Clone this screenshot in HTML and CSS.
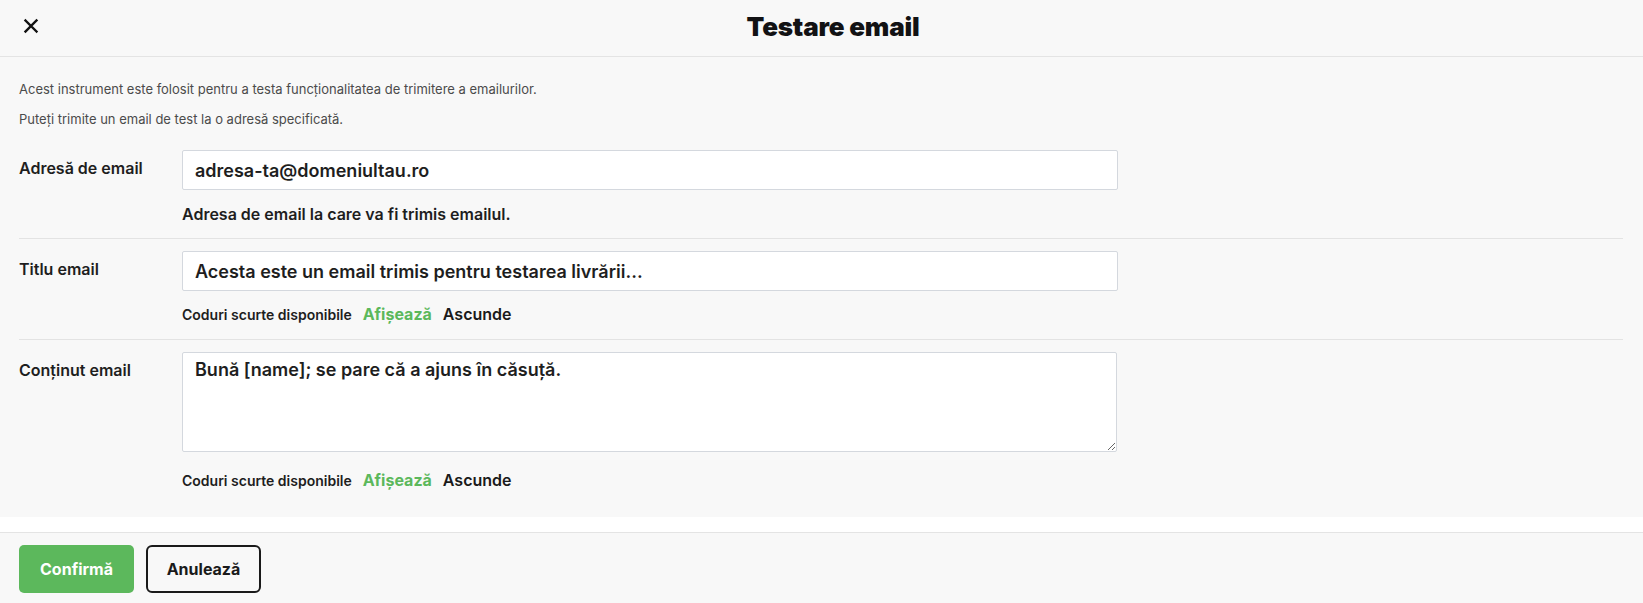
FILE: index.html
```html
<!DOCTYPE html>
<html lang="ro">
<head>
<meta charset="utf-8">
<title>Testare email</title>
<link rel="stylesheet" href="styles.css">
</head>
<body>
<div class="modal">
  <header class="modal-header">
    <button class="close" type="button" aria-label="Închide">
      <svg width="16" height="16" viewBox="0 0 16 16" aria-hidden="true"><path d="M2.5 2.5 L13.5 13.5 M13.5 2.5 L2.5 13.5" stroke="#111" stroke-width="2.4" fill="none" stroke-linecap="square"/></svg>
    </button>
    <h1 class="modal-title">Testare email</h1>
  </header>
  <div class="modal-wrap">
    <div class="modal-body">
      <div class="intro">
        <p>Acest instrument este folosit pentru a testa funcționalitatea de trimitere a emailurilor.</p>
        <p>Puteți trimite un email de test la o adresă specificată.</p>
      </div>
      <div class="field">
        <label class="field-label" for="email">Adresă de email</label>
        <div class="field-control">
          <input id="email" class="input" type="text" value="adresa-ta@domeniultau.ro">
          <div class="hint">Adresa de email la care va fi trimis emailul.</div>
        </div>
      </div>
      <div class="field">
        <label class="field-label" for="subject">Titlu email</label>
        <div class="field-control">
          <input id="subject" class="input" type="text" value="Acesta este un email trimis pentru testarea livrării...">
          <div class="shortcodes"><span class="sc-label">Coduri scurte disponibile</span><a class="sc-show" href="#">Afișează</a><a class="sc-hide" href="#">Ascunde</a></div>
        </div>
      </div>
      <div class="field last">
        <label class="field-label" for="content">Conținut email</label>
        <div class="field-control">
          <textarea id="content" class="textarea">Bună [name]; se pare că a ajuns în căsuță.</textarea>
          <div class="shortcodes after-area"><span class="sc-label">Coduri scurte disponibile</span><a class="sc-show" href="#">Afișează</a><a class="sc-hide" href="#">Ascunde</a></div>
        </div>
      </div>
    </div>
  </div>
  <footer class="modal-footer">
    <button class="btn btn-primary" type="button">Confirmă</button>
    <button class="btn btn-outline" type="button">Anulează</button>
  </footer>
</div>
</body>
</html>
```
FILE: styles.css
```css
* { box-sizing: border-box; }
html, body { margin: 0; padding: 0; }
body {
  background: #ffffff;
  font-family: Inter, "Noto Sans", "Liberation Sans", sans-serif;
  color: #222;
}
.modal { width: 1643px; min-height: 603px; display: flex; flex-direction: column; }

.modal-header {
  height: 57px;
  display: flex;
  align-items: center;
  padding: 0 20px 4px 19px;
  background: #f8f8f8;
  border-bottom: 1px solid #e4e4e4;
}
.close {
  width: 24px; height: 24px;
  padding: 0; margin: 0;
  border: 0; background: transparent;
  display: flex; align-items: center; justify-content: flex-start;
  padding-left: 4px;
  cursor: pointer;
}
.close svg { display: block; }
.modal-title {
  flex: 1;
  margin: 0;
  text-align: center;
  font-size: 26px;
  font-weight: 900;
  color: #121214;
  letter-spacing: -0.2px;
}

.modal-wrap { background: #fff; padding-bottom: 15px; }
.modal-body {
  background: #f8f8f8;
  padding: 23px 20px 12px 19px;
}
.intro { display: flex; flex-direction: column; gap: 12px; margin-bottom: 10px; }
.intro p {
  margin: 0;
  font-size: 13px;
  line-height: 18px;
  color: #4b4b4b;
}

.field {
  display: flex;
  padding: 12px 0;
  border-bottom: 1px solid #e3e3e3;
}
.field.last { border-bottom: 0; }
.field-label {
  width: 163px;
  flex: none;
  padding-top: 6px;
  font-size: 16px;
  line-height: 24px;
  font-weight: 600;
  color: #1e1e1e;
}
.field-control { width: 936px; }
.input {
  display: block;
  width: 936px;
  height: 40px;
  padding: 0 12px;
  border: 1px solid #d4d8de;
  border-radius: 2px;
  background: #fff;
  font-family: inherit;
  font-size: 18px;
  font-weight: 600;
  color: #1e1e1e;
  outline: none;
}
.textarea {
  display: block;
  width: 935px;
  height: 100px;
  padding: 6px 12px;
  border: 1px solid #d4d8de;
  border-radius: 2px;
  background: #fff;
  font-family: inherit;
  font-size: 18px;
  line-height: 22px;
  font-weight: 600;
  color: #1e1e1e;
  outline: none;
  margin: 0;
}
.hint {
  margin-top: 12px;
  font-size: 16px;
  line-height: 24px;
  font-weight: 600;
  color: #1e1e1e;
}
.shortcodes {
  margin-top: 11px;
  display: flex;
  align-items: baseline;
  gap: 11px;
  line-height: 24px;
}
.shortcodes.after-area { margin-top: 16px; }
.sc-label { font-size: 14px; font-weight: 600; color: #1e1e1e; }
.sc-show { font-size: 16px; font-weight: 700; color: #5cb85c; text-decoration: none; }
.sc-hide { font-size: 16px; font-weight: 600; color: #1a1a1a; text-decoration: none; }

.modal-footer {
  flex: 1;
  display: flex;
  gap: 12px;
  padding: 12px 20px 10px 19px;
  background: #f8f8f8;
  border-top: 1px solid #e4e4e4;
}
.btn {
  width: 115px;
  height: 48px;
  font-family: inherit;
  font-size: 16px;
  font-weight: 700;
  cursor: pointer;
}
.btn-primary {
  background: #5cb85c;
  color: #fff;
  border: 0;
  border-radius: 5px;
}
.btn-outline {
  background: transparent;
  color: #1a1a1a;
  border: 2px solid #1a1a1a;
  border-radius: 6px;
}
```
